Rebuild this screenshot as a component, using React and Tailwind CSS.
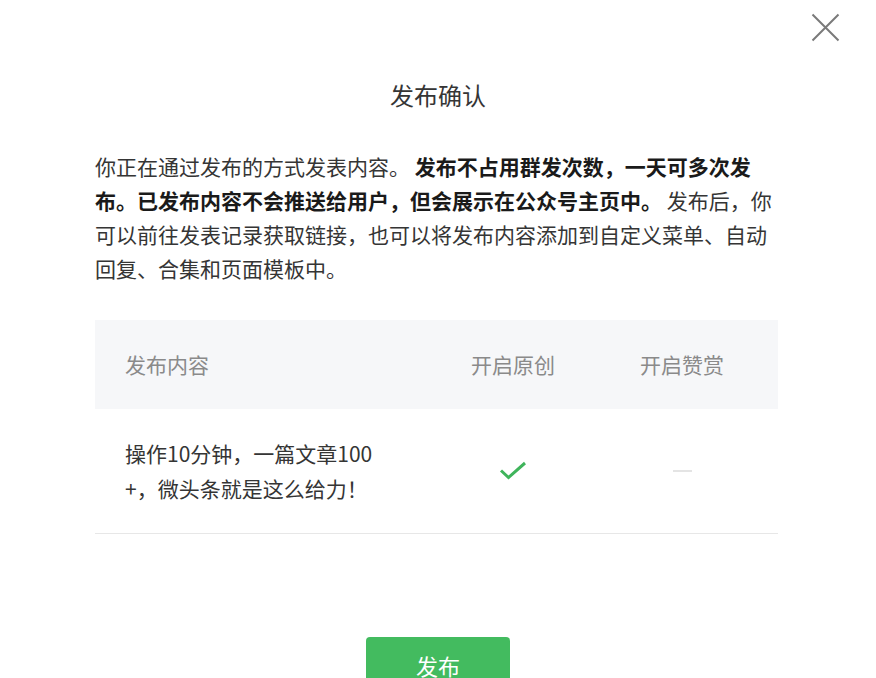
import React from "react";

export default function App() {
  return (
    <div
      className="relative w-[876px] h-[678px] overflow-hidden bg-white"
      style={{ fontFamily: '"Noto Sans CJK SC", "Noto Sans", sans-serif' }}
    >
      {/* close */}
      <button className="absolute left-[811px] top-[13px] w-[29px] h-[29px]">
        <svg viewBox="0 0 29 29" width="29" height="29">
          <path d="M1.5 1.5 L27.5 27.5 M27.5 1.5 L1.5 27.5" stroke="#7a7a7a" strokeWidth="2" fill="none" />
        </svg>
      </button>

      <div className="flex flex-col px-[95px] pt-[79px]">
        <h1 className="text-center text-[24px] leading-[32px] font-normal text-[#353535]">发布确认</h1>

        {/* description */}
        <p className="mt-[38px] w-[684px] text-[21px] leading-[34px] text-[#353535]">
          你正在通过发布的方式发表内容。{" "}
          <strong className="font-bold text-[#1a1a1a]">
            发布不占用群发次数，一天可多次发布。已发布内容不会推送给用户，但会展示在公众号主页中。
          </strong>{" "}
          发布后，你可以前往发表记录获取链接，也可以将发布内容添加到自定义菜单、自动回复、合集和页面模板中。
        </p>

        {/* table */}
        <div className="mt-[35px] w-[683px]">
          <div className="grid grid-cols-[335px_166px_1fr] items-center h-[89px] bg-[#f6f7f9] pr-[10px] text-[21px] text-[#8a8a8a]">
            <div className="pl-[30px]">发布内容</div>
            <div className="text-center">开启原创</div>
            <div className="text-center">开启赞赏</div>
          </div>
          <div className="grid grid-cols-[335px_166px_1fr] items-center h-[125px] border-b border-[#e7e7e7] pr-[10px]">
            <div className="pl-[30px] text-[21px] leading-[35px] text-[#353535]">
              操作10分钟，一篇文章100
              <br />
              +，微头条就是这么给力！
            </div>
            <div className="flex justify-center">
              <svg viewBox="0 0 28 20" width="28" height="20">
                <path d="M2 9.5 L9.5 16.5 L26 2" stroke="#3fb45b" strokeWidth="3" fill="none" />
              </svg>
            </div>
            <div className="flex justify-center">
              <div className="w-[19px] h-[2px] bg-[#e4e4e4]" />
            </div>
          </div>
        </div>

        {/* action */}
        <div className="mt-[103px] flex justify-center">
          <button className="w-[144px] h-[56px] rounded-[4px] bg-[#43bb5f] text-[22px] text-white">
            发布
          </button>
        </div>
      </div>
    </div>
  );
}
